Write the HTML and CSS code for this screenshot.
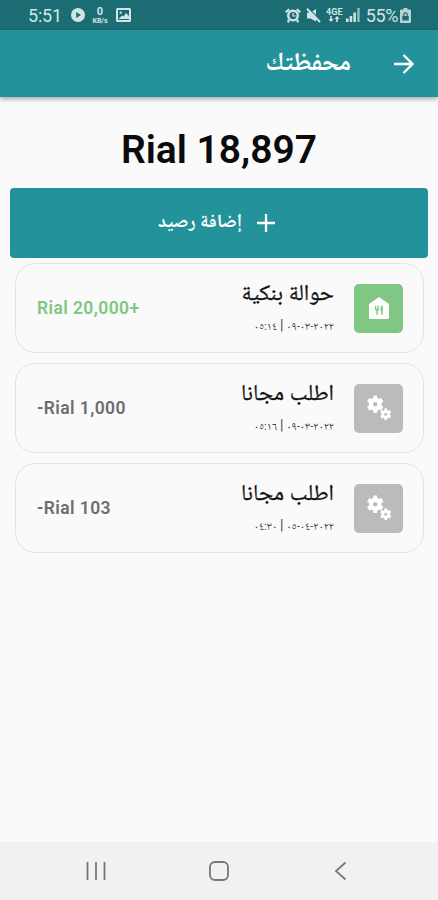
FILE: index.html
```html
<!DOCTYPE html>
<html lang="ar" dir="rtl">
<head>
<meta charset="utf-8">
<title>محفظتك</title>
<link rel="stylesheet" href="styles.css">
</head>
<body>
<svg width="0" height="0" class="defs">
  <symbol id="cog" viewBox="0 0 24 24"><path fill-rule="evenodd" d="M20 13.600a8 8 0 0 0 0-3.200l2.600-1.800-2.800-4.800-2.900 1.300a8 8 0 0 0-2.400-1.400L14.200.5H9.800l-.3 3.200a8 8 0 0 0-2.400 1.400L4.200 3.800 1.400 8.600 4 10.400a8 8 0 0 0 0 3.200l-2.600 1.800 2.800 4.800 2.900-1.300a8 8 0 0 0 2.400 1.400l.3 3.200h4.400l.3-3.200a8 8 0 0 0 2.400-1.400l2.900 1.300 2.800-4.800zM12 14.900a2.900 2.900 0 1 1 0-5.800 2.900 2.900 0 0 1 0 5.800z"/></symbol>
</svg>
<div class="screen">
  <div class="status" dir="ltr">
    <div class="left">
      <span class="clock">5:51</span>
      <svg class="play" width="14" height="14" viewBox="0 0 14 14"><path fill-rule="evenodd" d="M7 0a7 7 0 1 0 0 14A7 7 0 0 0 7 0zM5.200 4v6l4.800-3z"/></svg>
      <span class="speed"><b>0</b><i>KB/s</i></span>
      <svg class="pic" width="15" height="14" viewBox="0 0 15 14"><path fill-rule="evenodd" d="M1.500 0h12Q15 0 15 1.500v11q0 1.500-1.500 1.500h-12Q0 14 0 12.500v-11Q0 0 1.500 0zM2 2v10h11V2z"/><path d="M3 10.500l3-3 1.500 1 2.500-3.500 3 3V11H3z"/><circle cx="4.800" cy="4.600" r="1.200"/></svg>
    </div>
    <div class="right">
      <svg width="16" height="15" viewBox="0 0 16 15"><path fill-rule="evenodd" d="M8 1.500a6 6 0 1 0 0 12 6 6 0 0 0 0-12zM8 4a3.600 3.600 0 1 1 0 7.200A3.600 3.600 0 0 1 8 4z"/><path d="M0 3.500L3.500.5 5 2 1.500 5zM16 3.500L12.500.5 11 2l3.500 3zM3 11l2 2-1.500 2L2 13.500zM13 11l-2 2 1.500 2 1.500-1.500zM7.500 5h1.200v2.400h2v1.200H7.500z"/></svg>
      <svg class="mute" width="15" height="15" viewBox="0 0 15 15"><path d="M1 4.500h3.500L10 1v12.500L4.500 10.500H1z"/><path d="M2.200 .2L14.800 12.800" stroke="#1b6d73" stroke-width="1.400"/><path d="M1 .8L14 14" stroke="#d2e5e6" stroke-width="2"/></svg>
      <span class="net"><b>4GE</b><svg width="12" height="6" viewBox="0 0 12 6"><path d="M3 6L.5 3h1.700V0h1.600v3h1.700zM9 0l2.500 3H9.800v3H8.200V3H6.500z"/></svg></span>
      <svg class="bars" width="14" height="14" viewBox="0 0 14 14"><path d="M0 10.500h2.500V14H0zM3.700 8h2.500v6H3.700z"/><path d="M7.400 4.500h2.500V14H7.400z"/><path opacity=".65" d="M11.200 0h2.500v14h-2.500z"/></svg>
      <span class="pct">55%</span>
      <svg width="11" height="15" viewBox="0 0 11 15"><path fill-rule="evenodd" d="M3.500 0h4v1.500H10q1 0 1 1V14q0 1-1 1H1q-1 0-1-1V2.500q0-1 1-1h2.500zM3.200 6.500V8h-.9v4.500h6.400V8h-.9V6.500a2.300 2.300 0 0 0-4.600 0zm1.200 0a1.100 1.100 0 0 1 2.200 0V8H4.400z" opacity=".85"/></svg>
    </div>
  </div>
  <header class="appbar">
    <svg class="back" width="20" height="20" viewBox="0 0 20 20"><path d="M0 10h18M9.500 1l9 9-9 9"/></svg>
    <h1>محفظتك</h1>
  </header>
  <main>
    <div class="balance" dir="ltr">Rial 18,897</div>
    <button class="add">
      <svg width="18" height="18" viewBox="0 0 18 18"><path d="M9 0v18M0 9h18"/></svg>
      <span>إضافة رصيد</span>
    </button>
    <section class="list">
      <article class="card">
        <div class="tile green"><svg width="22" height="23" viewBox="0 0 22 23"><path fill-rule="evenodd" d="M11 0l10 7v13.500q0 1.500-1.500 1.500h-17Q1 22 1 20.500V7zM7 8.500v4.300l1.300 1v4h1.500v-4l1.300-1V8.500h-.8v3.300h-.7V8.500h-.8v3.300h-.8V8.500zm5.500 1.800v3.500l.8.500v3.500h1.500V8.500q-2 0-2.300 1.800z"/></svg></div>
        <div class="info"><h2>حوالة بنكية</h2><p><bdo dir="ltr">٠٥:١٤ <em>|</em> ٠٩-٠٣-٢٠٢٢</bdo></p></div>
        <div class="amount plus" dir="ltr">Rial 20,000+</div>
      </article>
      <article class="card">
        <div class="tile"><svg width="26" height="26" viewBox="0 0 26 26"><use href="#cog" x="0" y="0" width="18.500" height="18.500"/><use href="#cog" x="13.500" y="13" width="12.500" height="12.500"/></svg></div>
        <div class="info"><h2>اطلب مجانا</h2><p><bdo dir="ltr">٠٥:١٦ <em>|</em> ٠٩-٠٣-٢٠٢٢</bdo></p></div>
        <div class="amount" dir="ltr">-Rial 1,000</div>
      </article>
      <article class="card">
        <div class="tile"><svg width="26" height="26" viewBox="0 0 26 26"><use href="#cog" x="0" y="0" width="18.500" height="18.500"/><use href="#cog" x="13.500" y="13" width="12.500" height="12.500"/></svg></div>
        <div class="info"><h2>اطلب مجانا</h2><p><bdo dir="ltr">٠٤:٣٠ <em>|</em> ٠٥-٠٤-٢٠٢٢</bdo></p></div>
        <div class="amount" dir="ltr">-Rial 103</div>
      </article>
    </section>
  </main>
  <nav class="nav" dir="ltr">
    <svg width="20" height="20" viewBox="0 0 20 20"><path d="M1.500 1v18M10 1v18M18.500 1v18"/></svg>
    <svg width="20" height="20" viewBox="0 0 20 20"><rect x="1" y="1" width="18" height="18" rx="5"/></svg>
    <svg width="20" height="20" viewBox="0 0 20 20"><path d="M14.500 1.500L5 10l9.500 8.500"/></svg>
  </nav>
</div>
</body>
</html>
```
FILE: styles.css
```css
* { box-sizing: border-box; }
body { margin: 0; font-family: Roboto, "Noto Naskh Arabic", "Noto Sans Arabic", "DejaVu Sans", sans-serif; }
h1, h2, p { margin: 0; }
.defs { position: absolute; }
.screen { width: 438px; height: 900px; display: flex; flex-direction: column; background: #fafafa; overflow: hidden; }
.status { height: 30px; flex: none; background: #1b6d73; color: #d2e5e6; display: flex; justify-content: space-between; padding: 0 27px 0 28px; }
.status svg { fill: #d2e5e6; flex: none; }
.left, .right { display: flex; align-items: center; }
.clock { font-size: 18px; width: 43px; letter-spacing: -.2px; }
.speed { display: flex; flex-direction: column; align-items: center; width: 18px; margin: 0 7px 0 6px; }
.speed b { font-size: 11px; line-height: 11px; }
.speed i { font: bold 7px/7px Roboto, sans-serif; margin-top: 1px; }
.mute { margin-left: 5px; }
.net { width: 19px; margin: 0 2px 0 4px; display: flex; flex-direction: column; align-items: center; }
.net b { font-size: 9px; line-height: 8px; }
.pct { font-size: 18px; margin: 0 2px 0 6px; letter-spacing: -.4px; }
.appbar { height: 67px; flex: none; background: #24929a; color: #fff; display: flex; align-items: center; padding: 0 24px; box-shadow: 0 2px 5px rgba(0,0,0,.35); z-index: 1; }
.back { fill: none; stroke: #fff; stroke-width: 2.3; }
h1 { font-size: 25.5px; margin-right: 43px; line-height: 30px; margin-top: -6px; }
main { flex: 1; padding: 0 10px; }
.balance { height: 91px; display: flex; align-items: center; justify-content: center; padding-top: 15px; font-size: 39px; font-weight: 600; color: #0b0b0b; }
.add { display: flex; width: 418px; height: 70px; border: 0; border-radius: 4px; background: #24929a; color: #fff; align-items: center; justify-content: center; gap: 15px; font: bold 18.6px Roboto, "Noto Naskh Arabic", "Noto Sans Arabic", sans-serif; padding: 0 5px 0 0; }
.add svg { stroke: #fff; stroke-width: 2.3; }
.add span { line-height: 24px; margin-top: -4px; }
.list { display: flex; flex-direction: column; gap: 10px; padding: 5px 4px 0 5px; }
.card { height: 90px; border: 1px solid #e4e4e4; border-radius: 20px; display: flex; align-items: center; padding: 0 20px 0 21px; }
.tile { width: 49px; height: 49px; border-radius: 5px; background: #bbb; display: flex; align-items: center; justify-content: center; }
.tile svg { fill: #fff; }
.green { background: #7fc783; }
.info { margin-right: 20px; height: 64px; display: flex; flex-direction: column; }
h2 { font-size: 22.6px; font-weight: 400; line-height: 34px; color: #111; -webkit-text-stroke: .3px #111; }
.info p { font-size: 11.5px; line-height: 24px; color: #444; padding-top: 3px; }
.info em { font-style: normal; font-size: 14px; }
.amount { margin-right: auto; font-size: 17.5px; font-weight: 600; color: #6e6e6e; letter-spacing: .4px; }
.plus { color: #7fc783; }
.nav { height: 58px; flex: none; background: #f1f1f1; display: flex; justify-content: space-between; align-items: center; padding: 0 87px 0 86px; }
.nav svg { fill: none; stroke: #777; stroke-width: 1.8; }
```
